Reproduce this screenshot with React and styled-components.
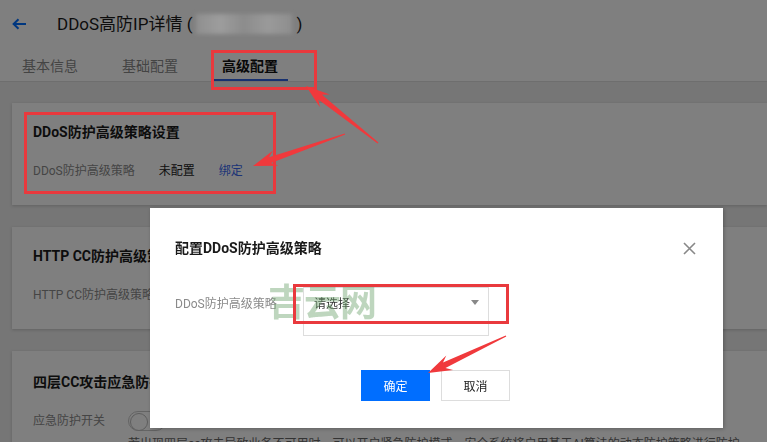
import React from 'react';
import styled, { createGlobalStyle } from 'styled-components';

const GlobalStyle = createGlobalStyle`
  html, body {
    margin: 0;
    height: 100%;
    overflow: hidden;
  }
  body {
    background: #ececec;
    font-family: Roboto, "Noto Sans CJK SC", sans-serif;
    color: #222;
  }
  * { box-sizing: border-box; }
`;

const Page = styled.div`
  position: relative;
  width: 100%;
  height: 100vh;
  overflow: hidden;
`;

const Header = styled.header`
  background: #fff;
  border-bottom: 1px solid #ddd;
`;

const TitleRow = styled.div`
  display: flex;
  align-items: center;
  padding: 12px 0 0 12px;
  height: 36px;
`;

const BackButton = styled.span`
  display: flex;
  width: 14px;
  margin-right: 31px;
  svg {
    width: 14px;
    height: 12px;
  }
`;

const Title = styled.h1`
  margin: 0;
  font-size: 17px;
  font-weight: 400;
  line-height: 24px;
  color: #1a1a1a;
  white-space: nowrap;
`;

const Hidden = styled.span`
  display: inline-block;
  width: 104px;
`;

const Tabs = styled.nav`
  display: flex;
  gap: 24px;
  margin-top: 10px;
  padding-left: 12px;
`;

const Tab = styled.span`
  padding: 10px 10px 3px;
  font-size: 14px;
  line-height: 20px;
  color: ${(p) => (p.$active ? '#111' : '#888')};
  font-weight: ${(p) => (p.$active ? 700 : 400)};
  border-bottom: 2px solid ${(p) => (p.$active ? '#2f62e0' : 'transparent')};
`;

const Content = styled.main`
  display: flex;
  flex-direction: column;
  gap: 22px;
  padding: 21px 0 0 12px;
`;

const Card = styled.section`
  background: #fff;
  box-shadow: 0 1px 3px rgba(0, 0, 0, 0.18);
  padding: ${(p) => p.$pt || 20}px 20px 24px 21px;
`;

const CardTitle = styled.h3`
  margin: 0 0 20px;
  font-size: 14px;
  font-weight: 700;
  line-height: 18px;
  color: #1a1a1a;
  white-space: nowrap;
`;

const Row = styled.div`
  display: flex;
  align-items: center;
  gap: ${(p) => p.$gap ?? 24}px;
  font-size: 12px;
  line-height: 20px;
  white-space: nowrap;
`;

const Label = styled.span`
  color: #8a8a8a;
  ${(p) => p.$width && `width: ${p.$width}px;`}
`;

const Value = styled.span`
  color: #222;
`;

const Link = styled.a`
  color: #3a68ee;
  text-decoration: none;
`;

const Toggle = styled.span`
  position: relative;
  width: 38px;
  height: 20px;
  border: 1px solid #c8c8c8;
  border-radius: 10px;
  background: #fff;
  &::after {
    content: '';
    position: absolute;
    left: 1px;
    top: 1px;
    width: 16px;
    height: 16px;
    border-radius: 50%;
    border: 1px solid #bbb;
    background: #fff;
  }
`;

const Desc = styled.p`
  margin: 4px 0 0 95px;
  font-size: 12px;
  line-height: 18px;
  color: #666;
  white-space: nowrap;
`;

const Overlay = styled.div`
  position: fixed;
  inset: 0;
  background: rgba(0, 0, 0, 0.5);
  padding: 208px 0 0 150px;
`;

const Dialog = styled.div`
  position: relative;
  width: 573px;
  background: #fff;
  padding: 30px 27px 27px 25px;
  box-shadow: 1px 1px 4px rgba(0, 0, 0, 0.25);
`;

const DialogHead = styled.div`
  display: flex;
  align-items: center;
  justify-content: space-between;
  height: 20px;
`;

const DialogTitle = styled.h2`
  margin: 0;
  font-size: 14px;
  font-weight: 700;
  line-height: 20px;
  color: #1a1a1a;
`;

const Close = styled.span`
  display: flex;
  svg {
    width: 13px;
    height: 13px;
  }
`;

const FormRow = styled.div`
  display: flex;
  align-items: center;
  margin-top: 29px;
  font-size: 12px;
`;

const FormLabel = styled.span`
  width: 128px;
  color: #8a8a8a;
`;

const Select = styled.div`
  position: relative;
  display: flex;
  align-items: center;
  justify-content: space-between;
  width: 186px;
  height: 30px;
  padding: 0 9px 0 10px;
  border: 1px solid #ddd;
  color: #333;
`;

const Caret = styled.span`
  width: 0;
  height: 0;
  border-left: 4px solid transparent;
  border-right: 4px solid transparent;
  border-top: 5px solid #888;
`;

const DropList = styled.div`
  position: absolute;
  top: 100%;
  left: -1px;
  right: -1px;
  height: 20px;
  background: #fff;
  border: 1px solid #ddd;
  border-top: none;
`;

const Actions = styled.div`
  display: flex;
  justify-content: center;
  gap: 11px;
  margin-top: 53px;
`;

const Button = styled.button`
  width: 69px;
  height: 31px;
  font-family: inherit;
  font-size: 12px;
  border: 1px solid ${(p) => (p.$primary ? '#006eff' : '#ddd')};
  background: ${(p) => (p.$primary ? '#006eff' : '#fff')};
  color: ${(p) => (p.$primary ? '#fff' : '#222')};
`;

const Marks = styled.div`
  position: absolute;
  inset: 0;
  pointer-events: none;
  svg {
    position: absolute;
    inset: 0;
  }
`;

const RedBox = styled.div`
  position: absolute;
  left: ${(p) => p.$x}px;
  top: ${(p) => p.$y}px;
  width: ${(p) => p.$w}px;
  height: ${(p) => p.$h}px;
  border: 3px solid #e9393d;
`;

const Censor = styled.div`
  position: absolute;
  left: 196px;
  top: 14px;
  width: 96px;
  height: 20px;
  background: linear-gradient(90deg, #8f8f8f, #9d9d9d 25%, #8c8c8c 50%, #9a9a9a 75%, #8e8e8e);
  filter: blur(2px);
`;

const Watermark = styled.div`
  position: absolute;
  left: 268px;
  top: 281px;
  font-family: "Noto Sans CJK SC", sans-serif;
  font-size: 37px;
  font-weight: 700;
  line-height: 38px;
  letter-spacing: -1px;
  color: rgba(110, 165, 110, 0.45);
`;

function arrowPoints(tx, ty, px, py) {
  const dx = px - tx;
  const dy = py - ty;
  const len = Math.hypot(dx, dy);
  const ux = dx / len;
  const uy = dy / len;
  const nx = -uy;
  const ny = ux;
  const head = 18;
  const back = 24;
  const pts = [
    [tx + nx * 0.6, ty + ny * 0.6],
    [px - ux * head + nx * 3, py - uy * head + ny * 3],
    [px - ux * back + nx * 8, py - uy * back + ny * 8],
    [px, py],
    [px - ux * back - nx * 8, py - uy * back - ny * 8],
    [px - ux * head - nx * 3, py - uy * head - ny * 3],
    [tx - nx * 0.6, ty - ny * 0.6],
  ];
  return pts.map((p) => p.map((v) => v.toFixed(1)).join(',')).join(' ');
}

const arrows = [
  [378, 143, 306, 86],
  [345, 134, 253, 166],
  [506, 336, 428, 373],
];

export default function App() {
  return (
    <Page>
      <GlobalStyle />
      <Header>
        <TitleRow>
          <BackButton>
            <svg viewBox="0 0 14 12" fill="none" stroke="#006eff" strokeWidth="2">
              <path d="M14 6H2M6.5 1.2L1.6 6l4.9 4.8" />
            </svg>
          </BackButton>
          <Title>
            DDoS高防IP详情 (<Hidden />)
          </Title>
        </TitleRow>
        <Tabs>
          <Tab>基本信息</Tab>
          <Tab>基础配置</Tab>
          <Tab $active>高级配置</Tab>
        </Tabs>
      </Header>

      <Content>
        <Card>
          <CardTitle>DDoS防护高级策略设置</CardTitle>
          <Row>
            <Label>DDoS防护高级策略</Label>
            <Value>未配置</Value>
            <Link>绑定</Link>
          </Row>
        </Card>
        <Card>
          <CardTitle>HTTP CC防护高级策略设置</CardTitle>
          <Row>
            <Label>HTTP CC防护高级策略</Label>
            <Value>未配置</Value>
          </Row>
        </Card>
        <Card $pt={22}>
          <CardTitle>四层CC攻击应急防护</CardTitle>
          <Row $gap={0}>
            <Label $width={95}>应急防护开关</Label>
            <Toggle />
          </Row>
          <Desc>
            若出现四层cc攻击导致业务不可用时，可以开启紧急防护模式，安全系统将启用基于AI算法的动态防护策略进行防护
          </Desc>
        </Card>
      </Content>

      <Overlay>
        <Dialog>
          <DialogHead>
            <DialogTitle>配置DDoS防护高级策略</DialogTitle>
            <Close>
              <svg viewBox="0 0 13 13" stroke="#888" strokeWidth="1.6">
                <path d="M1 1l11 11M12 1L1 12" />
              </svg>
            </Close>
          </DialogHead>
          <FormRow>
            <FormLabel>DDoS防护高级策略</FormLabel>
            <Select>
              <span>请选择</span>
              <Caret />
              <DropList />
            </Select>
          </FormRow>
          <Actions>
            <Button $primary>确定</Button>
            <Button>取消</Button>
          </Actions>
        </Dialog>
      </Overlay>

      <Marks>
        <Censor />
        <Watermark>吉云网</Watermark>
        <RedBox $x={211} $y={50} $w={106} $h={40} />
        <RedBox $x={24} $y={112} $w={252} $h={82} />
        <RedBox $x={293} $y={284} $w={216} $h={40} />
        <svg width="767" height="442" viewBox="0 0 767 442">
          {arrows.map((a, i) => (
            <polygon key={i} points={arrowPoints(...a)} fill="#f0393c" />
          ))}
        </svg>
      </Marks>
    </Page>
  );
}
